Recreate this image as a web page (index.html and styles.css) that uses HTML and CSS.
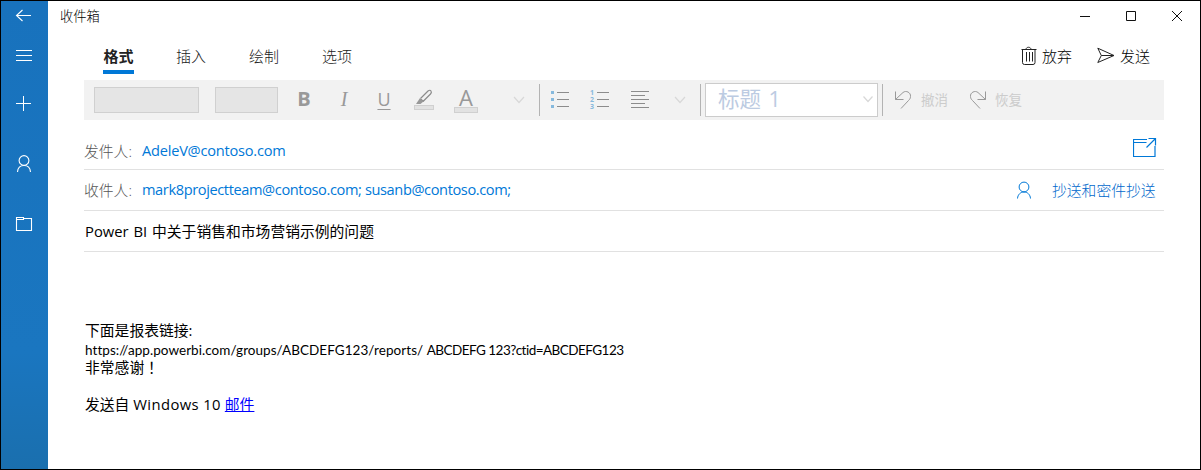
FILE: index.html
```html
<!DOCTYPE html>
<html lang="zh-CN">
<head>
<meta charset="utf-8">
<title>收件箱</title>
<link rel="stylesheet" href="styles.css">
</head>
<body>
<div class="window">
  <nav class="rail">
    <svg class="rail-back" width="47" height="30" viewBox="0 0 47 30"><path d="M30 14.5H15.5M21.5 9l-6 5.5 6 5.5"/></svg>
    <svg width="47" height="48" viewBox="0 0 47 48"><path d="M15 19.5h16M15 24.5h16M15 29.5h16" shape-rendering="crispEdges"/></svg>
    <svg width="47" height="48" viewBox="0 0 47 48"><path d="M15 24.5h15M22.5 17v15" shape-rendering="crispEdges"/></svg>
    <svg class="rail-person" width="47" height="60" viewBox="0 0 47 60"><circle cx="23" cy="25.5" r="4.9"/><path d="M16.5 37c.3-4 3-6.500 6.500-6.500s6.200 2.500 6.500 6.500"/></svg>
    <svg width="47" height="60" viewBox="0 0 47 60"><path d="M15.500 26.500h7v1h8v12h-15zM15.500 28.500h7v-1"/></svg>
  </nav>
  <main class="main">
    <header class="titlebar">
      <span class="title">收件箱</span>
      <div class="controls">
        <svg width="46" height="30" viewBox="0 0 46 30"><path d="M18 15.500h10"/></svg>
        <svg width="46" height="30" viewBox="0 0 46 30"><path d="M18.500 10.500h9v9h-9z"/></svg>
        <svg width="46" height="30" viewBox="0 0 46 30"><path d="M18 10l10 10M28 10l-10 10"/></svg>
      </div>
    </header>
    <div class="compose">
      <div class="commands">
        <div class="tabs">
          <span class="tab active">格式</span><span class="tab">插入</span><span class="tab">绘制</span><span class="tab">选项</span>
        </div>
        <div class="actions">
          <span class="action"><svg width="16" height="20" viewBox="0 0 16 20"><path d="M.5 3.500h15M5 3.500c0-3 5-3 5 0M1.500 3.500v13q0 2 2 2h8.500q2 0 2-2v-13M5.500 6v9.500M8.500 6v9.500M11.500 6v9.500"/></svg><span>放弃</span></span>
          <span class="action send"><svg width="19" height="20" viewBox="0 0 19 20"><path d="M.8 2.200L17 9.500.8 16.500l3.500-7zM4.300 9.500H17"/></svg><span>发送</span></span>
        </div>
      </div>
      <div class="toolbar">
        <span class="box font-box"></span>
        <span class="box size-box"></span>
        <span class="glyph bold">B</span>
        <span class="glyph italic">I</span>
        <span class="glyph under">U</span>
        <svg class="pen" width="20" height="26" viewBox="0 0 20 26"><rect x=".5" y="18.500" width="19" height="4" fill="#e2e2e2" stroke="#d0d0d0"/><path d="M6.500 11.500l7.500-7.500q2-1.500 3 0t-.5 3L9 14.500M6.500 11.500L9 14.500" fill="none" stroke="#8c8c8c" stroke-width="1.200"/><path d="M2 17l4-6 3.500 3.500-3 2.500z" fill="#999"/></svg>
        <span class="color"><span>A</span><i></i></span>
        <svg class="chev c1" width="12" height="8" viewBox="0 0 12 8"><path d="M1 1l5 5.500L11 1"/></svg>
        <span class="sep s1"></span>
        <svg class="list bullets" width="19" height="20" viewBox="0 0 19 20"><path d="M6 2.500h12M6 9.500h12M6 16.500h12" stroke="#8c8c8c"/><path d="M0 1h3v3H0zM0 8h3v3H0zM0 15h3v3H0z" fill="#86b9dd"/></svg>
        <span class="numbered"><span class="nums"><b>1</b><b>2</b><b>3</b></span><svg width="12" height="20" viewBox="0 0 12 20"><path d="M0 2.500h12M0 9.500h12M0 16.500h12" stroke="#8c8c8c"/></svg></span>
        <svg class="align" width="18" height="20" viewBox="0 0 18 20"><path d="M0 1.500h18M0 5.500h14M0 9.500h18M0 13.500h14M0 17.500h18" stroke="#8c8c8c"/></svg>
        <svg class="chev c2" width="12" height="8" viewBox="0 0 12 8"><path d="M1 1l5 5.500L11 1"/></svg>
        <span class="sep s2"></span>
        <span class="style-select"><span>标题 1</span><svg class="chev" width="10" height="7" viewBox="0 0 10 7"><path d="M.5.500L5 5.500 9.500.500"/></svg></span>
        <span class="sep s3"></span>
        <svg class="undo" width="18" height="20" viewBox="0 0 18 20"><path d="M1.500 1.500v8h8M1.500 9.500L9 2.500c3-2.500 8 0 7.500 4 0 2-1 3-2 4L7 18.500"/></svg>
        <span class="tool-label">撤消</span>
        <svg class="redo" width="18" height="20" viewBox="0 0 18 20"><path d="M16.500 1.500v8h-8M16.500 9.500L9 2.500c-3-2.500-8 0-7.500 4 0 2 1 3 2 4L11 18.500"/></svg>
        <span class="tool-label redo-label">恢复</span>
      </div>
      <div class="field from"><span class="label">发件人:</span><span class="address">AdeleV@contoso.com</span>
        <svg class="popout" width="24" height="22" viewBox="0 0 24 22"><path d="M14 2.500H.500v17h21.500V9M.5 5.500h13M15.500 1.500h7v7M22.500 1.500l-9 9"/></svg></div>
      <div class="field to"><span class="label">收件人:</span><span class="address recipients">mark8projectteam@contoso.com; susanb@contoso.com;</span>
        <svg class="person" width="16" height="18" viewBox="0 0 16 18"><circle cx="8" cy="6" r="4.900"/><path d="M1.500 17.500c.3-4 3-6.500 6.500-6.500s6.200 2.500 6.500 6.500"/></svg><span class="cc">抄送和密件抄送</span></div>
      <div class="field subject">Power BI 中关于销售和市场营销示例的问题</div>
      <div class="body">
        <p>下面是报表链接:</p>
        <p class="url">https://app.powerbi.com/groups/ABCDEFG123/reports/ <span class="query">ABCDEFG 123?ctid=ABCDEFG123</span></p>
        <p>非常感谢<span class="mark" lang="zh-TW">！</span></p>
        <p class="signature">发送自 <span class="latin">Windows 10</span> <a class="link">邮件</a></p>
      </div>
    </div>
  </main>
</div>
</body>
</html>
```
FILE: styles.css
```css
* { box-sizing: border-box; }
body { margin: 0; font-family: "Open Sans", "Noto Sans CJK SC", sans-serif; font-size: 14.8px; color: #000; }
svg { display: block; flex: none; fill: none; }
p { margin: 0; }
.window { display: flex; width: 1201px; height: 470px; border: 1px solid #000; background: #fff; overflow: hidden; white-space: nowrap; }
.rail { width: 47px; flex: none; background: linear-gradient(#1872bd, #1a76c0 75%, #1a6fae); }
.rail svg { stroke: #fff; stroke-width: 1.1; }
.rail .rail-person { margin-top: 8px; margin-bottom: -4px; }
.main { flex: 1; min-width: 0; }
.titlebar { display: flex; justify-content: space-between; height: 31px; padding-left: 12px; }
.title { font-size: 13.3px; font-weight: 300; line-height: 30px; color: #000; }
.controls { display: flex; }
.controls svg { stroke: #111; }
.compose { padding: 0 36px; }
.commands { display: flex; justify-content: space-between; height: 48px; }
.tabs { display: flex; gap: 42px; padding-left: 19px; }
.tab { height: 42px; padding: 0 1px; margin-left: -1px; font-size: 15px; font-weight: 300; line-height: 49px; color: #222; }
.tab.active { width: 31px; margin: 0; padding: 0; text-align: center; font-weight: 700; border-bottom: 4px solid #0078d7; }
.actions { display: flex; gap: 25px; padding-right: 14px; height: 48px; }
.action { display: flex; align-items: center; gap: 5px; font-size: 15px; font-weight: 300; color: #000; }
.action.send { gap: 4px; }
.action svg { stroke: #222; }
.action span { margin-top: -1px; }
.toolbar { display: flex; align-items: center; height: 40px; background: #f2f2f2; padding-left: 10px; color: #999; }
.toolbar > * { flex: none; }
.box { height: 26px; background: #e5e5e5; border: 1px solid #d0d0d0; }
.font-box { width: 105px; }
.size-box { width: 63px; margin-left: 16px; }
.glyph { width: 40px; text-align: center; font-size: 20px; line-height: 38px; height: 40px; }
.bold { font-weight: 700; margin-left: 6px; }
.italic { font-family: "Liberation Serif", serif; font-style: italic; }
.under { font-size: 18px; text-decoration: underline; text-decoration-thickness: 1px; text-underline-offset: 3px; }
.pen { margin-left: 10px; }
.color { display: flex; flex-direction: column; width: 24px; margin-left: 20px; align-items: center; font-size: 22px; line-height: 19px; }
.color i { width: 24px; height: 6px; border: 1px solid #d0d0d0; background: #e2e2e2; }
.chev { stroke: #d8d8d8; stroke-width: 1.2; }
.c1 { margin-left: 35px; }
.sep { width: 1px; height: 32px; background: #b3b3b3; }
.s1 { margin-left: 14px; }
.bullets { margin-left: 11px; }
.numbered { display: flex; width: 19px; margin-left: 20px; gap: 2px; }
.nums { width: 5px; margin-top: -1px; display: flex; flex-direction: column; font-size: 7px; line-height: 7px; color: #86b9dd; }
.align { margin-left: 22px; }
.c2 { margin-left: 25px; }
.s2 { margin-left: 14px; }
.style-select { display: flex; align-items: center; justify-content: space-between; width: 173px; height: 34px; margin-left: 4px; padding: 0 4px 2px 12px; border: 1px solid #ccc; background: #fff; font-size: 21.5px; word-spacing: 2px; line-height: 30px; color: #bccbe2; }
.s3 { margin-left: 4px; }
.undo { margin-left: 11px; stroke: #999; }
.redo { margin-left: 20px; stroke: #999; }
.tool-label { width: 28px; margin-left: 9px; font-size: 13.5px; line-height: 20px; color: #ccc; }
.redo-label { margin-left: 8px; }
.field { display: flex; align-items: center; border-bottom: 1px solid #e1e1e1; }
.from { height: 50px; padding-top: 11px; }
.to, .subject { height: 41px; padding-bottom: 1px; }
.label { width: 58px; font-weight: 300; color: #555; }
.address { color: #0078d7; font-size: 14.6px; letter-spacing: -0.22px; }
.recipients { letter-spacing: -0.39px; margin-top: -2px; }
.popout { margin-left: auto; margin-right: 7px; margin-top: -5px; stroke: #0078d7; stroke-width: 1.2; }
.person { margin-left: auto; margin-right: 20px; stroke: #0078d7; }
.cc { color: #0068cc; font-weight: 300; width: 104px; margin-right: 8px; }
.subject { padding-left: 1px; word-spacing: 1px; }
.body { padding: 69px 0 0 1px; line-height: 19px; }
.url { font-family: Lato, sans-serif; font-size: 13.5px; letter-spacing: 0.05px; line-height: 20px; margin-bottom: -2px; }
.query { letter-spacing: -0.53px; }
.mark { font-family: "Noto Sans CJK TC", sans-serif; line-height: 1; }
.signature { margin-top: 18px; }
.latin { letter-spacing: 0.4px; }
.link { color: #00f; text-decoration: underline; }
```
